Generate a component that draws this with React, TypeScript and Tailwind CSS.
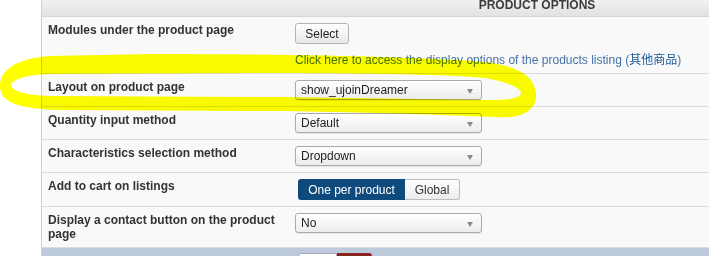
import React from "react";

const font = { fontFamily: '"Liberation Sans", Arial, "Noto Sans CJK SC", sans-serif' };

function FakeSelect({ value }: { value: string }) {
  return (
    <div className="relative flex h-[20px] w-[187px] items-center rounded-[3px] border border-[#aaa] bg-gradient-to-b from-white to-[#ececec] pl-[5px] text-[12px] text-[#222] shadow-[0_1px_1px_rgba(0,0,0,0.08)]">
      {value}
      <span className="absolute right-[8px] top-[8px] h-0 w-0 border-x-[3px] border-t-[5px] border-x-transparent border-t-[#888]" />
    </div>
  );
}

function Row({ label, children }: { label: string; children: React.ReactNode }) {
  return (
    <div className="flex border-b border-[#dcdcdc] bg-[#f9f9f9]">
      <div className="w-[247px] shrink-0 pl-[6px] pr-[12px] pt-[6px] pb-[6px] text-[12px] font-bold leading-[14px] text-[#333]">
        {label}
      </div>
      <div className="pl-[6px] pt-[6px] pb-[6px]">{children}</div>
    </div>
  );
}

export default function App() {
  return (
    <div className="relative h-[256px] w-[709px] overflow-hidden bg-white" style={font}>
      <div className="flex">
        <div className="w-[41px] shrink-0 bg-white" />
        <div className="w-[991px] shrink-0 border-l border-[#cfcfcf]">
          <div className="h-[17px] overflow-hidden border-b border-[#d6d6d6] bg-gradient-to-b from-[#f1f1f1] to-[#e2e2e2] text-center">
            <div className="relative -top-[2px] text-[12px] font-bold uppercase leading-[14px] text-[#3b3b3b]">Product options</div>
          </div>

          <Row label="Modules under the product page">
            <button className="block h-[21px] w-[54px] rounded-[3px] border border-[#b4b4b4] bg-gradient-to-b from-white to-[#e8e8e8] text-[12px] text-[#222]">
              Select
            </button>
            <div className="mt-[9px] text-[12px] leading-[14px] text-[#4671a6]">
              Click here to access the display options of the products listing (<span className="text-[#1c5797]">其他商品</span>)
            </div>
          </Row>

          <Row label="Layout on product page">
            <FakeSelect value="show_ujoinDreamer" />
          </Row>

          <Row label="Quantity input method">
            <FakeSelect value="Default" />
          </Row>

          <Row label="Characteristics selection method">
            <FakeSelect value="Dropdown" />
          </Row>

          <Row label="Add to cart on listings">
            <div className="ml-[3px] flex h-[21px]">
              <div className="flex w-[107px] items-center justify-center rounded-l-[3px] bg-[#0f4a7c] text-[12px] text-white">
                One per product
              </div>
              <div className="flex w-[55px] items-center justify-center rounded-r-[3px] border border-l-0 border-[#bdbdbd] bg-gradient-to-b from-white to-[#ececec] text-[12px] text-[#333]">
                Global
              </div>
            </div>
          </Row>

          <Row label="Display a contact button on the product page">
            <FakeSelect value="No" />
          </Row>

          <div className="flex h-[20px] bg-[#bccadb] pt-[5px] pl-[256px]">
            <div className="h-[16px] w-[39px] rounded-tl-[3px] border border-[#aab] bg-white" />
            <div className="h-[16px] w-[35px] rounded-tr-[3px] bg-[#8b2420]" />
          </div>
        </div>
      </div>

      <svg className="pointer-events-none absolute inset-0 mix-blend-multiply" width="709" height="256">
        <path
          fill="#ffff00"
          fillRule="evenodd"
          d="M0,86 C0,68 20,58 50,56 L150,54 C300,54 420,57 485,62 C520,66 536,78 536,95 C536,112 520,119 495,117 C420,114 350,112 280,111 L60,110 C18,109 0,102 0,86 Z M11,85 C13,79 26,75 50,74 L280,73 C400,74 455,75 485,78 C508,82 521,88 521,93 C521,98 510,100 490,100 C420,99 350,98 280,97 L50,96 C26,95 11,91 11,85 Z"
        />
      </svg>
    </div>
  );
}
